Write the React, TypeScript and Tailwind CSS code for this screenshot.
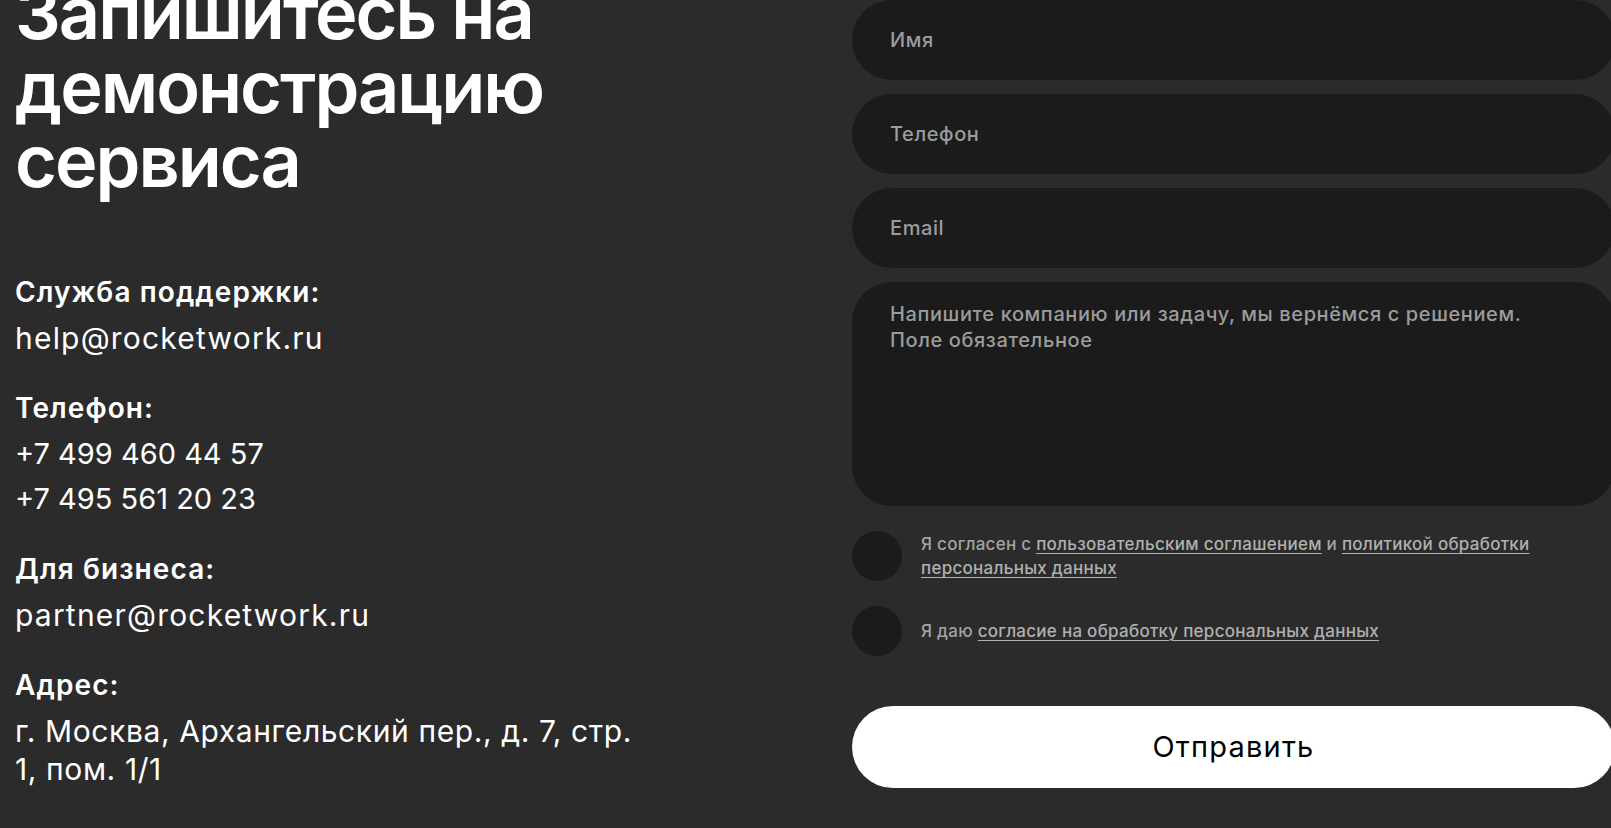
import React from "react";

const font = { fontFamily: "Inter, 'Noto Sans', sans-serif" };

const labelCls = "text-[28px] leading-[38px] font-semibold text-white tracking-[1.1px]";
const emailCls = "text-[30px] leading-[38px] font-normal text-white tracking-[1.2px]";
const phoneCls = "text-[29px] leading-[38px] font-normal text-white";

function ContactGroup({ label, children }: { label: string; children: React.ReactNode }) {
  return (
    <div className="flex flex-col gap-[8px]">
      <div className={labelCls}>{label}</div>
      <div className="flex flex-col gap-[7px]">{children}</div>
    </div>
  );
}

function Consent({ children }: { children: React.ReactNode }) {
  return (
    <label className="flex items-center gap-[19px] cursor-pointer">
      <span className="w-[50px] h-[50px] rounded-full bg-[#1b1b1b] shrink-0" />
      <span className="text-[17px] leading-[24px] font-medium tracking-[0.27px] text-[#a3a3a3]">{children}</span>
    </label>
  );
}

function DocLink({ children }: { children: React.ReactNode }) {
  return (
    <a href="#" className="underline underline-offset-[3px] decoration-[1px] text-[#b0b0b0]">
      {children}
    </a>
  );
}

const fieldCls =
  "h-[80px] w-full rounded-full bg-[#1b1b1b] px-[38px] text-[20px] font-medium tracking-[0.6px] text-white placeholder:text-[#9c9c9c] outline-none";

export default function App() {
  return (
    <div className="min-h-screen w-full overflow-hidden bg-[#2b2b2b]" style={font}>
      <div className="flex">
        {/* contacts column */}
        <div className="w-[852px] shrink-0 pl-[15px]">
          <h1 className="mt-[-24px] text-[72px] leading-[74px] font-semibold text-white tracking-[-2px]">
            Запишитесь на
            <br />
            демонстрацию
            <br />
            сервиса
          </h1>
          <div className="mt-[75px] flex flex-col gap-[32px] w-[635px]">
            <ContactGroup label="Служба поддержки:">
              <div className={emailCls}>help@rocketwork.ru</div>
            </ContactGroup>
            <ContactGroup label="Телефон:">
              <div className={phoneCls}>+7 499 460 44 57</div>
              <div className={phoneCls}>+7 495 561 20 23</div>
            </ContactGroup>
            <ContactGroup label="Для бизнеса:">
              <div className={emailCls}>partner@rocketwork.ru</div>
            </ContactGroup>
            <ContactGroup label="Адрес:">
              <div className="text-[30px] leading-[38px] font-normal text-white tracking-[0.6px]">
                г. Москва, Архангельский пер., д. 7, стр. 1, пом. 1/1
              </div>
            </ContactGroup>
          </div>
        </div>

        {/* request form */}
        <form className="w-[763px] shrink-0 flex flex-col" onSubmit={(e) => e.preventDefault()}>
          <div className="flex flex-col gap-[14px]">
            <input placeholder="Имя" className={fieldCls} />
            <input placeholder="Телефон" className={fieldCls} />
            <input placeholder="Email" className={fieldCls} />
            <textarea
              placeholder={"Напишите компанию или задачу, мы вернёмся с решением.\nПоле обязательное"}
              className="h-[224px] w-full resize-none rounded-[40px] bg-[#1b1b1b] px-[38px] pt-[19px] text-[20px] leading-[26px] font-medium tracking-[0.6px] text-white placeholder:text-[#9c9c9c] outline-none"
            />
          </div>

          <div className="mt-[25px] flex flex-col gap-[25px]">
            <Consent>
              Я согласен с <DocLink>пользовательским соглашением</DocLink> и{" "}
              <DocLink>политикой обработки персональных данных</DocLink>
            </Consent>
            <Consent>
              Я даю <DocLink>согласие на обработку персональных данных</DocLink>
            </Consent>
          </div>

          <button
            type="submit"
            className="mt-[50px] h-[82px] w-full rounded-full bg-white text-[29px] font-normal tracking-[1.2px] text-black"
          >
            Отправить
          </button>
        </form>
      </div>
    </div>
  );
}
